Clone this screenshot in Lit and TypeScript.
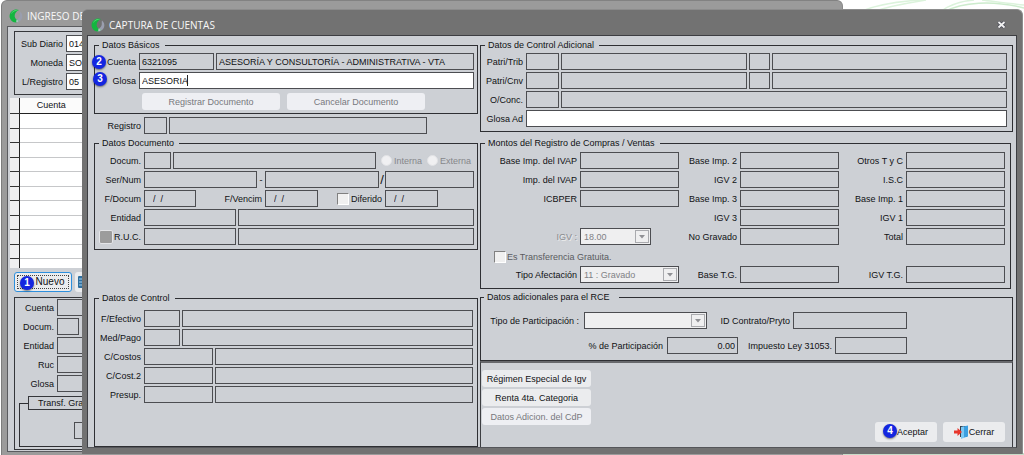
import { LitElement, html, css, svg, nothing } from "lit";
import { customElement } from "lit/decorators.js";

const shared = css`
  * {
    box-sizing: border-box;
  }
  :host {
    display: flex;
    flex-direction: column;
    font: 9px/12px "Liberation Sans", Arial, sans-serif;
    color: #101114;
    border-radius: 6px 6px 0 0;
    overflow: hidden;
  }
  .titlebar {
    display: flex;
    align-items: center;
    gap: 4px;
    color: #f8f8f8;
    font: 10px/16px "Open Sans", "Noto Sans", sans-serif;
  }
  .titlebar h1 {
    margin: 0;
    flex: 1;
    font: inherit;
  }
  .logo {
    width: 14px;
    height: 14px;
    flex: none;
  }
  fieldset {
    margin: 0;
    min-width: 0;
    border: 1px solid #2e2f33;
    display: flex;
    flex-direction: column;
    gap: 2px;
    padding: 2px 3px 3px 0;
  }
  legend {
    margin-left: 4px;
    padding: 0 5px 0 3px;
    height: 12px;
    white-space: nowrap;
  }
  .row {
    display: flex;
    align-items: center;
    gap: 2px;
    min-height: 17px;
  }
  .label {
    flex: none;
    text-align: right;
    white-space: nowrap;
    padding-right: 1px;
  }
  input,
  select,
  button {
    font: inherit;
    color: inherit;
    border-radius: 0;
    margin: 0;
  }
  .field {
    flex: none;
    height: 17px;
    min-width: 0;
    padding: 0 2px;
    border: 1px solid #4c4d51;
    background: transparent;
    outline: none;
  }
  .field.white {
    background: #fff;
  }
  .field.grow {
    flex: 1 1 0;
    width: 0;
  }
  .field.num {
    text-align: right;
  }
  .field.date {
    padding-left: 8px;
  }
  .btn {
    border: 0;
    border-radius: 3px;
    background: #ebecee;
    color: #101114;
    padding: 0;
    height: 17px;
    display: flex;
    align-items: center;
    justify-content: center;
    white-space: nowrap;
  }
  .btn:disabled {
    background: #eeeff3;
    color: #77787d;
  }
  .badge {
    position: absolute;
    width: 14px;
    height: 14px;
    border-radius: 50%;
    background: #1426e0;
    color: #fff;
    font: bold 10px/14px "Liberation Sans", Arial, sans-serif;
    text-align: center;
    box-shadow: 0 1px 2px rgba(0, 0, 0, 0.5);
    z-index: 2;
  }
`;

const logo = () => svg`
  <svg class="logo" viewBox="0 0 14 14" aria-hidden="true">
    <path d="M11 2.4 C13.2 4 14 7 12.900 9.600 C11.800 12.400 9 13.900 6.200 13.400 L5 11 C8 11.200 11 9.400 10.800 5.600 C10.800 4.400 10.600 3.400 11 2.400 Z" fill="#9a9eae"/>
    <path d="M10 1.100 C5.800 -0.700 0.900 2 0.600 6.800 C0.400 10.200 3 13.200 6.600 13.400 C8.200 13.400 9.400 12.600 10.200 11.600 C7.800 11.400 6 9.800 5.700 7.600 C5.400 4.800 7.200 2.400 10 1.100 Z" fill="#14b540"/>
    <path d="M9.400 1.100 C5.800 0.400 2.600 2.200 1.800 5.600 C3.400 3 6 1.900 9.400 1.100 Z" fill="#58e078"/>
    <path d="M7 10.300 C8 11.300 9.200 11.600 10.200 11.600 C9.400 12.600 8.200 13.200 7 13.300 C7.800 12.400 7.600 11.200 7 10.300 Z" fill="#c9ccd6"/>
  </svg>`;

interface FieldOptions {
  id?: string;
  label?: string;
  width?: number;
  value?: string;
  kind?: string;
  edit?: boolean;
}

const field = (o: FieldOptions = {}) => html`<input
  class="field ${o.width ? "" : "grow"} ${o.kind ?? ""}"
  id=${o.id ?? nothing}
  aria-label=${o.label ?? nothing}
  style=${o.width ? `width:${o.width}px` : nothing}
  .value=${o.value ?? ""}
  ?readonly=${!o.edit}
/>`;

@customElement("voucher-window")
class VoucherWindow extends LitElement {
  static styles = [
    shared,
    css`
      :host {
        background: #9b9b9b;
        border-top: 1px solid #828282;
        border-left: 1px solid #7d7d7d;
        border-right: 1px solid #8a8a8a;
        padding: 0 6px 3px 5px;
      }
      .titlebar {
        height: 25px;
        padding: 4px 0 0 2px;
      }
      .body {
        flex: 1;
        display: flex;
        flex-direction: column;
        border: 1px solid #5a5b5f;
        background: #cdd0d5;
        padding: 4px 2px 1px 2px;
      }
      .head {
        margin-left: 4px;
        border: 1px solid #35363a;
        padding: 3px 0 4px;
        display: flex;
        flex-direction: column;
        gap: 2px;
      }
      .head .label {
        width: 49px;
      }
      table {
        margin-top: 3px;
        width: 100%;
        border-collapse: collapse;
        table-layout: fixed;
        background: #fff;
      }
      th {
        font-weight: normal;
        padding: 0;
        height: 15px;
        background: #fbfbfb;
        border-bottom: 1px solid #222;
      }
      td {
        padding: 0;
        height: 15px;
        border-bottom: 1px solid #c6c7c9;
      }
      tr:nth-child(even) td {
        height: 14px;
      }
      tr:last-child td {
        height: 10px;
        border-bottom: 0;
      }
      .mark {
        width: 9px;
        background: #efeff0;
        border-right: 1px solid #222;
        border-bottom: 1px solid #333;
      }
      .account {
        width: 64px;
      }
      .actions {
        display: flex;
        gap: 3px;
        margin: 4px 0 5px 4px;
      }
      .actions .btn {
        width: 58px;
        height: 20px;
        font-size: 10px;
      }
      .actions .new {
        border: 1px solid #2d8fdd;
        outline: 1px dotted #444;
        outline-offset: -4px;
        padding-left: 14px;
      }
      .actions .next {
        justify-content: flex-start;
        padding-left: 3px;
      }
      .detail {
        flex: 1;
        margin-left: 4px;
        border: 1px solid #35363a;
        padding: 1px 0 2px;
        display: flex;
        flex-direction: column;
        gap: 2px;
      }
      .detail .label {
        width: 40px;
      }
      .free {
        margin: 2px 4px 0;
        flex: 1;
        padding: 12px 0 0 54px;
      }
      .free legend {
        border: 1px solid #35363a;
        padding: 0 9px;
        height: 14px;
        min-width: 120px;
        margin-left: -46px;
      }
      .badge {
        left: 18px;
        top: 275px;
      }
    `,
  ];

  render() {
    const heads: [string, string][] = [
      ["Sub Diario", "014"],
      ["Moneda", "SO"],
      ["L/Registro", "05"],
    ];
    const details: [string, number][] = [
      ["Cuenta", 90],
      ["Docum.", 22],
      ["Entidad", 90],
      ["Ruc", 90],
      ["Glosa", 90],
    ];
    return html`
      <header class="titlebar">${logo()}<h1>INGRESO DE</h1></header>
      <div class="body">
        <div class="head">
          ${heads.map(
            ([name, value], i) => html`<div class="row">
              <label class="label" for="h${i}">${name}</label>
              ${field({ id: `h${i}`, width: 90, value, kind: "white", edit: true })}
            </div>`
          )}
        </div>
        <table>
          <thead>
            <tr><th class="mark"></th><th class="account">Cuenta</th><th></th></tr>
          </thead>
          <tbody>
            ${Array.from({ length: 11 }, () => html`<tr><td class="mark"></td><td></td><td></td></tr>`)}
          </tbody>
        </table>
        <div class="actions">
          <button class="btn new">Nuevo</button>
          <button class="btn next" aria-label="Modificar">
            <svg width="12" height="14" viewBox="0 0 12 14" aria-hidden="true">
              <rect x="0" y="1" width="10" height="12" rx="1" fill="#2f6f9f" />
              <path d="M1 4h8M1 7h8M1 10h8" stroke="#a8d4f0" />
            </svg>
          </button>
        </div>
        <div class="detail">
          ${details.map(
            ([name, width], i) => html`<div class="row">
              <label class="label" for="d${i}">${name}</label>
              ${field({ id: `d${i}`, width })}
            </div>`
          )}
          <fieldset class="free">
            <legend>Transf. Gra</legend>
            ${field({ label: "Transf. Gra", width: 80 })}
          </fieldset>
        </div>
      </div>
      <span class="badge">1</span>
    `;
  }
}

@customElement("accounts-window")
class AccountsWindow extends LitElement {
  static styles = [
    shared,
    css`
      :host {
        background: #727272;
        border-top: 1px solid #8d8d8d;
        border-right: 1px solid #8d8d8d;
        padding: 0 5px 6px;
      }
      .titlebar {
        height: 25px;
        padding: 4px 10px 0 4px;
      }
      .close {
        border: 0;
        background: none;
        padding: 0;
        width: 11px;
        height: 11px;
        display: flex;
      }
      .body {
        flex: 1;
        display: flex;
        gap: 2px;
        border: 1px solid #3d3e42;
        border-bottom-color: #55565a;
        background: #cdd0d5;
        padding: 3px 3px 0 6px;
      }
      .left {
        flex: 0 1 384px;
        min-width: 0;
        display: flex;
        flex-direction: column;
      }
      .right {
        flex: 1 1 0;
        min-width: 0;
        display: flex;
        flex-direction: column;
      }
      .basic .label {
        width: 42px;
      }
      .buttons {
        display: flex;
        gap: 7px;
        margin: 2px 0 0 47px;
      }
      .buttons .btn {
        flex: 0 1 138px;
      }
      .record {
        margin: 3px 51px 3px 0;
      }
      .record .label {
        width: 48px;
      }
      .document .label.first,
      .control .label {
        width: 47px;
      }
      .document {
        padding: 3px 3px 4px 0;
      }
      .between {
        flex: none;
        text-align: center;
      }
      .between.dash {
        width: 4px;
      }
      .between.slash {
        width: 2px;
        display: flex;
        justify-content: center;
        font-size: 13px;
      }
      .due {
        width: 65px;
      }
      .deferred {
        margin-left: 17px;
      }
      .option {
        display: flex;
        align-items: center;
        gap: 2px;
        color: #86878b;
        width: 44px;
        white-space: nowrap;
      }
      .option.start {
        margin-left: 3px;
      }
      .option.end {
        margin-right: 3px;
      }
      input[type="radio"] {
        appearance: none;
        flex: none;
        width: 11px;
        height: 11px;
        border-radius: 50%;
        background: #f0f0f2;
        border: 1px solid #e2e3e6;
      }
      input[type="checkbox"] {
        appearance: none;
        flex: none;
        width: 12px;
        height: 12px;
        background: #f0f0f0;
        border: 1px solid #808080;
        border-right-color: #fff;
        border-bottom-color: #fff;
      }
      .ruc {
        display: flex;
        align-items: center;
        justify-content: space-between;
        padding-left: 4px;
      }
      input.solid {
        width: 14px;
        height: 14px;
        background: #9c9c9c;
        border: 1px solid #e4e5e8;
        border-radius: 2px;
      }
      .control {
        flex: 1;
        margin-top: 42px;
        padding-top: 6px;
        padding-right: 4px;
      }
      .extra {
        padding: 2px 5px 4px 0;
      }
      .extra .label {
        width: 43px;
      }
      .amounts {
        margin: 5px 2px 0 0;
        padding: 3px 5px 5px 0;
      }
      .grid {
        display: grid;
        grid-template-columns: 96fr 99fr 55fr 99fr 61fr 99fr;
        grid-auto-rows: 17px;
        gap: 2px 3px;
        align-items: center;
      }
      .grid .label {
        padding: 0;
      }
      .grid .field {
        width: 100%;
      }
      .grid .dim {
        color: #8a8b8f;
        text-shadow: 1px 1px #eceded;
      }
      .select {
        position: relative;
        display: flex;
        height: 17px;
        flex: none;
      }
      .select select {
        appearance: none;
        width: 100%;
        height: 17px;
        padding: 0 18px 0 3px;
        border: 1px solid #4c4d51;
        background: #efeff0;
        color: #808185;
        opacity: 1;
      }
      .select svg {
        position: absolute;
        right: 2px;
        top: 2px;
        width: 14px;
        height: 13px;
      }
      .rate {
        width: 71px;
      }
      .part {
        width: 123px;
      }
      .gift {
        grid-column: 1 / 7;
        display: flex;
        align-items: center;
        gap: 1px;
        padding: 2px 0 0 13px;
        color: #5a5b5f;
      }
      .rce {
        margin-top: 2px;
        padding: 9px 5px 6px 9px;
        gap: 8px;
      }
      .rce legend {
        margin-left: -6px;
        padding: 0 9px 0 3px;
      }
      .rce .row {
        gap: 3px;
      }
      .caption {
        flex: none;
        text-align: right;
        white-space: nowrap;
      }
      .c1 {
        width: 91px;
        padding-right: 2px;
      }
      .c2 {
        width: 80px;
      }
      .c3 {
        width: 174px;
        padding-right: 1px;
      }
      .c4 {
        width: 91px;
      }
      .footer {
        flex: 1;
        border: 1px solid #3d3e42;
        border-top: 2px solid #67686c;
        border-bottom: 0;
        display: flex;
        justify-content: space-between;
        padding: 7px 7px 5px 1px;
      }
      .stack {
        display: flex;
        flex-direction: column;
        gap: 2px;
      }
      .stack .btn {
        width: 109px;
      }
      .confirm {
        display: flex;
        align-items: flex-end;
        gap: 6px;
      }
      .confirm .btn {
        width: 62px;
        height: 20px;
      }
      .accept {
        padding-left: 13px;
      }
      .writing {
        position: relative;
        flex: 1;
        display: flex;
      }
      .caret {
        position: absolute;
        left: 48px;
        top: 3px;
        width: 1px;
        height: 11px;
        background: #222;
      }
      .b2 {
        left: 10px;
        top: 45px;
      }
      .b3 {
        left: 11px;
        top: 62px;
      }
      .b4 {
        right: 125px;
        bottom: 16px;
      }
    `,
  ];

  private arrow() {
    return svg`<svg viewBox="0 0 14 13" aria-hidden="true">
      <rect x="0.5" y="0.5" width="13" height="12" fill="#efeff0" stroke="#a9aaae"/>
      <path d="M4 5h6l-3 3.5z" fill="#909195"/>
    </svg>`;
  }

  private pair(id: string, name: string, width: number) {
    return html`<div class="row">
      <label class="label first" for=${id}>${name}</label>
      ${field({ id, width })}${field({ label: name })}
    </div>`;
  }

  private amount(id: string, name: string) {
    return html`<label class="label" for=${id}>${name}</label>${field({ id, kind: "num" })}`;
  }

  render() {
    const emptyDate = "/  /";
    return html`
      <header class="titlebar">
        ${logo()}
        <h1>CAPTURA DE CUENTAS</h1>
        <button class="close" aria-label="Cerrar">
          <svg width="11" height="11" viewBox="0 0 11 11" aria-hidden="true">
            <path d="M2.5 3l6 5.500M8.500 3l-6 5.500" stroke="#4b4c58" stroke-width="3.500" />
            <path d="M2.500 3l6 5.500M8.500 3l-6 5.500" stroke="#f2f2f2" stroke-width="1.800" />
          </svg>
        </button>
      </header>
      <div class="body">
        <div class="left">
          <fieldset class="basic">
            <legend>Datos Básicos</legend>
            <div class="row">
              <label class="label" for="cuenta">Cuenta</label>
              ${field({ id: "cuenta", width: 75, value: "6321095" })}
              ${field({ label: "Cuenta", value: "ASESORÍA Y CONSULTORÍA - ADMINISTRATIVA - VTA" })}
            </div>
            <div class="row">
              <label class="label" for="glosa">Glosa</label>
              <span class="writing">
                ${field({ id: "glosa", value: "ASESORIA", kind: "white", edit: true })}
                <span class="caret"></span>
              </span>
            </div>
            <div class="buttons">
              <button class="btn" disabled>Registrar Documento</button>
              <button class="btn" disabled>Cancelar Documento</button>
            </div>
          </fieldset>
          <div class="row record">
            <label class="label" for="registro">Registro</label>
            ${field({ id: "registro", width: 23 })}${field({ label: "Registro" })}
          </div>
          <fieldset class="document">
            <legend>Datos Documento</legend>
            <div class="row">
              <label class="label first" for="docum">Docum.</label>
              ${field({ id: "docum", width: 27 })}${field({ label: "Docum." })}
              <label class="option start"><input type="radio" name="origin" disabled />Interna</label>
              <label class="option end"><input type="radio" name="origin" disabled />Externa</label>
            </div>
            <div class="row">
              <label class="label first" for="serie">Ser/Num</label>
              ${field({ id: "serie", width: 113 })}
              <span class="between dash">-</span>
              ${field({ label: "Num", width: 114 })}
              <span class="between slash">/</span>
              ${field({ label: "Num" })}
            </div>
            <div class="row">
              <label class="label first" for="fdocum">F/Docum</label>
              ${field({ id: "fdocum", width: 52, value: emptyDate, kind: "date" })}
              <label class="label due" for="fvencim">F/Vencim</label>
              ${field({ id: "fvencim", width: 53, value: emptyDate, kind: "date" })}
              <input type="checkbox" class="deferred" id="diferido" />
              <label class="label" for="diferido">Diferido</label>
              ${field({ label: "Diferido", width: 53, value: emptyDate, kind: "date" })}
            </div>
            ${this.pair("entidad", "Entidad", 92)}
            <div class="row">
              <span class="label first ruc">
                <input type="checkbox" class="solid" aria-label="R.U.C." />
                <label for="ruc">R.U.C.</label>
              </span>
              ${field({ id: "ruc", width: 92 })}${field({ label: "R.U.C." })}
            </div>
          </fieldset>
          <fieldset class="control">
            <legend>Datos de Control</legend>
            ${this.pair("efectivo", "F/Efectivo", 36)} ${this.pair("pago", "Med/Pago", 36)}
            ${this.pair("costos", "C/Costos", 69)} ${this.pair("cost2", "C/Cost.2", 69)}
            ${this.pair("presup", "Presup.", 69)}
          </fieldset>
        </div>
        <div class="right">
          <fieldset class="extra">
            <legend>Datos de Control Adicional</legend>
            ${["Patri/Trib", "Patri/Cnv"].map(
              (name, i) => html`<div class="row">
                <label class="label" for="patri${i}">${name}</label>
                ${field({ id: `patri${i}`, width: 33 })}${field({ label: name, width: 186 })}
                ${field({ label: name, width: 21 })}${field({ label: name })}
              </div>`
            )}
            ${this.pair("conc", "O/Conc.", 33)}
            <div class="row">
              <label class="label" for="glosaad">Glosa Ad</label>
              ${field({ id: "glosaad", kind: "white", edit: true })}
            </div>
          </fieldset>
          <fieldset class="amounts">
            <legend>Montos del Registro de Compras / Ventas</legend>
            <div class="grid">
              ${this.amount("ivapb", "Base Imp. del IVAP")} ${this.amount("b2", "Base Imp. 2")}
              ${this.amount("otros", "Otros T y C")} ${this.amount("ivap", "Imp. del IVAP")}
              ${this.amount("igv2", "IGV 2")} ${this.amount("isc", "I.S.C")}
              ${this.amount("icbper", "ICBPER")} ${this.amount("b3", "Base Imp. 3")}
              ${this.amount("b1", "Base Imp. 1")}
              <span></span><span></span>
              ${this.amount("igv3", "IGV 3")} ${this.amount("igv1", "IGV 1")}
              <label class="label dim" for="igv">IGV :</label>
              <span class="select rate">
                <select id="igv" disabled><option>18.00</option></select>${this.arrow()}
              </span>
              ${this.amount("nograv", "No Gravado")} ${this.amount("total", "Total")}
              <label class="gift"><input type="checkbox" disabled />Es Transferencia Gratuita.</label>
              <label class="label" for="afect">Tipo Afectación</label>
              <span class="select">
                <select id="afect" disabled><option>11 : Gravado</option></select>${this.arrow()}
              </span>
              ${this.amount("basetg", "Base T.G.")} ${this.amount("igvtg", "IGV T.G.")}
            </div>
          </fieldset>
          <fieldset class="rce">
            <legend>Datos adicionales para el RCE</legend>
            <div class="row">
              <label class="caption c1" for="tpart">Tipo de Participación :</label>
              <span class="select part">
                <select id="tpart" disabled><option></option></select>${this.arrow()}
              </span>
              <label class="caption c2" for="contrato">ID Contrato/Pryto</label>
              ${field({ id: "contrato", width: 114 })}
            </div>
            <div class="row">
              <label class="caption c3" for="ppart">% de Participación</label>
              ${field({ id: "ppart", width: 71, value: "0.00", kind: "num" })}
              <label class="caption c4" for="ley">Impuesto Ley 31053.</label>
              ${field({ id: "ley", width: 72 })}
            </div>
          </fieldset>
          <div class="footer">
            <div class="stack">
              <button class="btn">Régimen Especial de Igv</button>
              <button class="btn">Renta 4ta. Categoria</button>
              <button class="btn" disabled>Datos Adicion. del CdP</button>
            </div>
            <div class="confirm">
              <button class="btn accept">Aceptar</button>
              <button class="btn">
                <svg width="15" height="14" viewBox="0 0 15 14" aria-hidden="true">
                  <path d="M6 1h7v11H6z" fill="#3a3f48" />
                  <path d="M7 2l7-1.500v11L7 13.500z" fill="#3c9fe0" />
                  <path d="M7 2l3-.6v11.500l-3 .6z" fill="#7cc8f4" />
                  <path d="M0 5.500h3.500V3L8 7l-4.500 4V8.500H0z" fill="#e8372c" />
                </svg>
                Cerrar
              </button>
            </div>
          </div>
        </div>
      </div>
      <span class="badge b2">2</span>
      <span class="badge b3">3</span>
      <span class="badge b4">4</span>
    `;
  }
}

@customElement("app-root")
class AppRoot extends LitElement {
  static styles = css`
    :host {
      display: block;
      position: relative;
      height: 100vh;
      overflow: hidden;
      background: #fff;
    }
    .swirl {
      position: absolute;
      right: 0;
      top: 0;
      width: 182px;
      height: 12px;
    }
    .strip {
      position: absolute;
      right: 0;
      bottom: 0;
      width: 181px;
      height: 2px;
      background: #c9dcc9;
    }
    voucher-window {
      position: absolute;
      left: 1px;
      right: 181px;
      top: 0;
      bottom: 0;
    }
    accounts-window {
      position: absolute;
      left: 82px;
      right: 1px;
      top: 9px;
      bottom: 1px;
    }
  `;

  render() {
    return html`
      <svg class="swirl" viewBox="0 0 182 12" aria-hidden="true">
        <g fill="none" stroke="#dcf3dc" stroke-width="1.500">
          <path d="M20 11 C40 3 60 1 80 0" />
          <path d="M30 12 C50 5 66 3 84 0" />
          <path d="M98 12 C108 4 120 1 132 0" />
          <path d="M102 12 C120 2 150 0 182 8" stroke="#cdeccd" />
          <path d="M140 0 C156 2 170 4 182 5" />
        </g>
      </svg>
      <div class="strip"></div>
      <voucher-window></voucher-window>
      <accounts-window></accounts-window>
    `;
  }
}
